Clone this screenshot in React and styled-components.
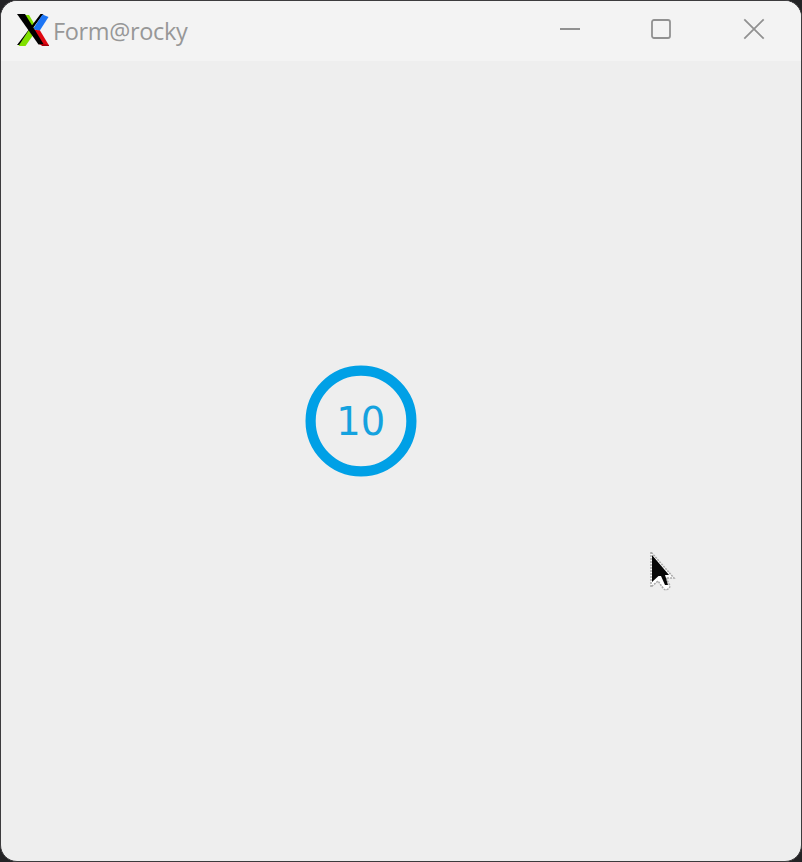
import React from "react";
import styled, { createGlobalStyle } from "styled-components";

const GlobalStyle = createGlobalStyle`
  * { box-sizing: border-box; }
  html, body { margin: 0; padding: 0; background: #202022; overflow: hidden; }
`;

const Desktop = styled.div`
  width: 802px;
  height: 862px;
  display: grid;
  background: #232325;
`;

const Window = styled.main`
  display: flex;
  flex-direction: column;
  border: 1px solid #3c3b3d;
  border-radius: 17px;
  background: #eeeeee;
  overflow: hidden;
`;

const TitleBar = styled.header`
  display: flex;
  align-items: flex-start;
  height: 60px;
  flex: none;
  padding-left: 16px;
  background: #f3f3f3;
`;

const Logo = styled.svg`
  display: block;
  width: 32px;
  height: 32px;
  margin-top: 13px;
`;

const Title = styled.h1`
  margin: 13px 0 0 4px;
  font: 400 23.5px/34px "Open Sans", "Noto Sans", sans-serif;
  letter-spacing: -0.35px;
  color: #979797;
  white-space: nowrap;
`;

const Controls = styled.div`
  display: flex;
  margin-left: auto;
`;

const ControlButton = styled.button`
  width: ${(p) => p.$width}px;
  height: 56px;
  padding: 0;
  border: 0;
  background: transparent;
  display: grid;
  place-items: center;
`;

const ControlIcon = styled.svg`
  display: block;
  width: 22px;
  height: 22px;
  fill: none;
  stroke: #919191;
  stroke-width: 1.8;
`;

const Content = styled.section`
  position: relative;
  flex: 1;
  padding: 304px 0 0 304px;
`;

const Counter = styled.svg`
  display: block;
  width: 112px;
  height: 112px;
`;

const Ring = styled.circle`
  fill: none;
  stroke: #00a0e6;
  stroke-width: 10.2;
`;

const Count = styled.text`
  font: 38.5px "DejaVu Sans", sans-serif;
  fill: #14a2df;
  text-anchor: middle;
`;

const Pointer = styled.svg`
  position: absolute;
  left: 649px;
  top: 489px;
  width: 27px;
  height: 42px;
`;

function XLogo() {
  return (
    <Logo viewBox="0 0 32 32">
      <path d="M7 1h5l6 10-3 5z" fill="#80e000" />
      <path d="M23.500 0h3L3 31H0L13 14z" fill="#000" />
      <path d="M25.500 0.500l6 2.500-9 14-6.500-2z" fill="#1c75f5" />
      <path d="M1.500 32l11-17 5 4-9 13z" fill="#80e000" />
      <path d="M16 15.500l7 1 9 15-7 .5z" fill="#df0710" />
      <path d="M0 0h8l18.500 30-5 .5z" fill="#000" />
      <path d="M22 30h4l6 1v1h-6z" fill="#a0000a" />
    </Logo>
  );
}

export default function App() {
  return (
    <>
      <GlobalStyle />
      <Desktop>
        <Window>
          <TitleBar>
            <XLogo />
            <Title>Form@rocky</Title>
            <Controls>
              <ControlButton $width={90} aria-label="Minimize">
                <ControlIcon viewBox="0 0 22 22"><path d="M1 11h20" /></ControlIcon>
              </ControlButton>
              <ControlButton $width={92} aria-label="Maximize">
                <ControlIcon viewBox="0 0 22 22"><rect x="2" y="2" width="18" height="18" rx="2" /></ControlIcon>
              </ControlButton>
              <ControlButton $width={94} aria-label="Close">
                <ControlIcon viewBox="0 0 22 22"><path d="M1.300 1.300l19.400 19.400M20.700 1.300L1.300 20.700" /></ControlIcon>
              </ControlButton>
            </Controls>
          </TitleBar>
          <Content>
            <Counter viewBox="0 0 112 112">
              <Ring cx="56" cy="56" r="50.400" />
              <Count x="55.800" y="70">10</Count>
            </Counter>
            <Pointer viewBox="0 0 27 42">
              <path d="M1 2v35l7-6 5 7q2 3 5 1t1-5l-3-6h8z" fill="#fff" stroke="#aaa" strokeWidth="1.500" strokeDasharray="2 1" />
              <path d="M2 5v27l6.500-6 2.500 0 4 9h3l-3-10h4z" fill="#080808" />
            </Pointer>
          </Content>
        </Window>
      </Desktop>
    </>
  );
}
